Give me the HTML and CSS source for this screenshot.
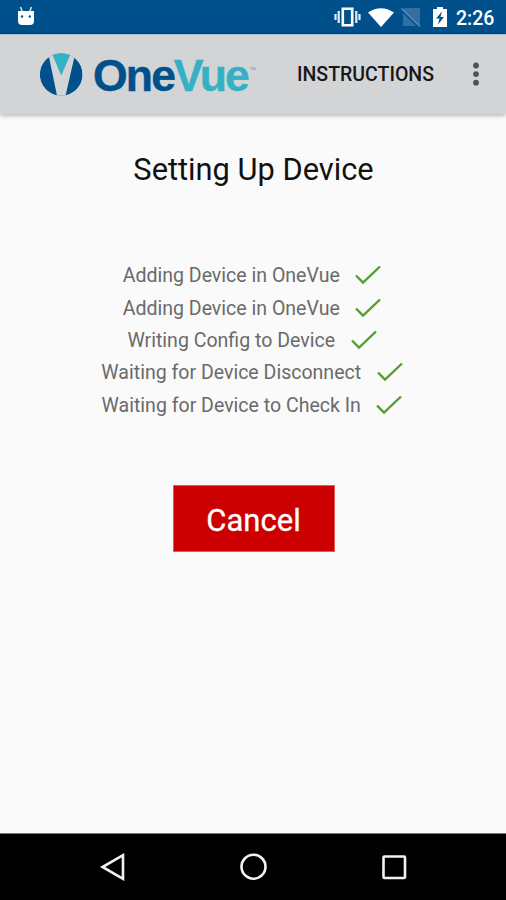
FILE: index.html
```html
<!DOCTYPE html>
<html lang="en">
<head>
<meta charset="utf-8">
<title>OneVue</title>
<link rel="stylesheet" href="styles.css">
</head>
<body>
<header class="status">
  <svg class="bot" width="18" height="20" viewBox="0 0 18 20"><path d="M3.500 1l2 5M14.500 1l-2 5" stroke="#d5e2ee" stroke-width="1.500"/><path d="M1 5h16v10q0 4-4 4H5q-4 0-4-4z" fill="#fff"/><circle cx="5" cy="10.500" r="1.200" fill="#00508c"/><circle cx="12.800" cy="10.500" r="1.200" fill="#00508c"/></svg>
  <svg class="icons" width="116" height="22" viewBox="0 0 116 22">
    <path d="M8.800 2.800h9.400v16.400H8.800z" fill="none" stroke="#fff" stroke-width="2.600"/>
    <path d="M4.700 5v12M1.500 8v6M22.300 5v12M25.500 8v6" stroke="#e4ecf4" stroke-width="2.200"/>
    <path d="M34 6.500Q47-2 60 6.500L47 21z" fill="#fff"/>
    <path d="M86 2v18L69 3.400Q70 2 72 2zM69 7l13 13H69z" fill="#326f9f"/>
    <path d="M67.500 2.500l18.500 18" stroke="#5b8db4" stroke-width="1.600"/>
    <path d="M99 3h4V1h6v2h4v18H99z" fill="#fff"/><path d="M108 5.500l-6 7h3.500l-1.500 6 6-7.500h-3.500z" fill="#00508c"/>
  </svg>
  <span class="clock">2:26</span>
</header>
<nav class="toolbar">
  <svg class="logo" width="220" height="60" viewBox="0 -5 220 60">
    <defs><clipPath id="disc"><circle cx="21.200" cy="24.500" r="21.300"/></clipPath></defs>
    <g clip-path="url(#disc)"><circle cx="21.200" cy="24.500" r="21.500" fill="#00508c"/><path d="M7.500 0l10 48h7.500L36 0z" fill="#d2d4d6"/><path d="M10.500 0l10.700 25.500L32.500 0z" fill="#35b1c6"/></g>
    <text class="wordmark one" x="53" y="41" textLength="83" lengthAdjust="spacing">One</text>
    <text class="wordmark vue" x="133.800" y="41" textLength="76" lengthAdjust="spacing">Vue</text>
    <text class="tm" x="209" y="22">™</text>
  </svg>
  <span class="action">INSTRUCTIONS</span>
  <svg class="more" width="8" height="26" viewBox="0 0 8 26"><g fill="#505153"><circle cx="4" cy="3.500" r="2.900"/><circle cx="4" cy="12.100" r="2.900"/><circle cx="4" cy="20.700" r="2.900"/></g></svg>
</nav>
<main>
  <h1>Setting Up Device</h1>
  <ul class="steps">
    <li><span>Adding Device in OneVue</span><svg class="check" viewBox="0 0 26 20"><path d="M1 10.500l7 7L25 1.500"/></svg></li>
    <li><span>Adding Device in OneVue</span><svg class="check" viewBox="0 0 26 20"><path d="M1 10.500l7 7L25 1.500"/></svg></li>
    <li><span>Writing Config to Device</span><svg class="check" viewBox="0 0 26 20"><path d="M1 10.500l7 7L25 1.500"/></svg></li>
    <li><span>Waiting for Device Disconnect</span><svg class="check" viewBox="0 0 26 20"><path d="M1 10.500l7 7L25 1.500"/></svg></li>
    <li><span>Waiting for Device to Check In</span><svg class="check" viewBox="0 0 26 20"><path d="M1 10.500l7 7L25 1.500"/></svg></li>
  </ul>
  <button class="cancel">Cancel</button>
</main>
<footer class="navbar">
  <svg width="28" height="28" viewBox="0 0 28 28"><path d="M24 2.200v23.600L3.500 14z"/></svg>
  <svg width="28" height="28" viewBox="0 0 28 28"><circle cx="13.500" cy="13.700" r="12"/></svg>
  <svg width="28" height="28" viewBox="0 0 28 28"><rect x="3.500" y="3.500" width="21.500" height="21.500" rx="1"/></svg>
</footer>
</body>
</html>
```
FILE: styles.css
```css
* { box-sizing: border-box; }
body { margin: 0; width: 506px; height: 900px; display: flex; flex-direction: column; background: #fafafa; font-family: Roboto, sans-serif; overflow: hidden; }
svg { display: block; flex: none; }
.status { height: 34px; flex: none; display: flex; align-items: center; background: #00508c; padding: 0 11px 0 17px; }
.bot { margin-top: -3px; }
.icons { margin-left: auto; }
.clock { color: #fff; font-size: 19.5px; font-weight: 500; line-height: 34px; margin-left: 6px; padding-top: 3px; width: 39px; white-space: nowrap; }
.toolbar { height: 80px; flex: none; display: flex; align-items: center; background: #d2d4d6; border-top: 1px solid #a9b9d6; padding-left: 40px; box-shadow: 0 1px 5px rgba(0,0,0,.35); }
.wordmark { font-family: "Liberation Sans", sans-serif; font-weight: 700; font-size: 44.5px; stroke-width: .4; }
.one { fill: #00508c; stroke: #00508c; }
.vue { fill: #35b1c6; stroke: #35b1c6; }
.tm { font-family: "Liberation Sans", sans-serif; font-size: 7px; fill: #35b1c6; }
.action { margin-left: 37px; width: 138px; font-size: 19.5px; font-weight: 500; color: #161718; white-space: nowrap; }
.more { margin-left: 37px; }
main { flex: 1; display: flex; flex-direction: column; align-items: center; }
h1 { margin: 36px 0 0; font-size: 30.8px; line-height: 40px; font-weight: 400; color: #111; white-space: nowrap; padding-left: 1px; }
.steps { list-style: none; margin: 69px 0 0; padding: 0; display: flex; flex-direction: column; align-items: center; }
.steps li { height: 32.4px; display: flex; align-items: center; gap: 15.5px; font-size: 19.55px; color: #6a6a6a; white-space: nowrap; margin-left: -2px; }
.steps span { padding-top: 1px; }
.check { width: 26px; height: 20px; }
.check path { fill: none; stroke: #4fa12c; stroke-width: 2.4; }
.cancel { margin: 64px 0 0 1px; width: 162px; height: 67px; border: 1px solid #de5a5a; border-radius: 0; padding: 4px 0 0; background: #c00; color: #fff; font: 400 31px Roboto, sans-serif; -webkit-text-stroke: .3px #fff; }
.navbar { height: 67px; flex: none; background: #000; border-top: 1px solid #777; display: flex; align-items: center; justify-content: space-between; padding: 0 98px 0 99px; }
.navbar path, .navbar circle, .navbar rect { fill: none; stroke: #f2f2f2; stroke-width: 2.6; }
```
